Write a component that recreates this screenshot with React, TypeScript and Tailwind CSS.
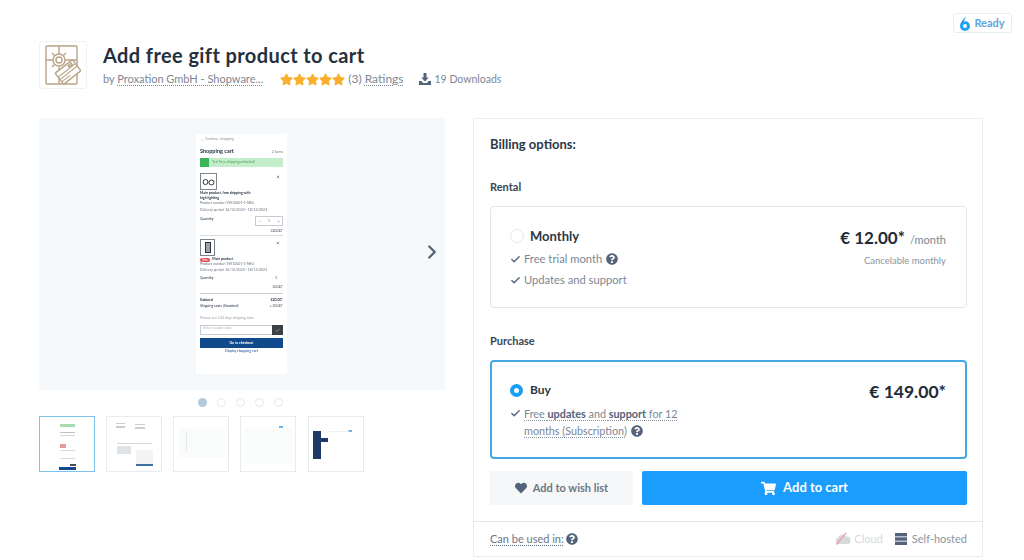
import { Check, ChevronLeft, ChevronRight, Minus, Plus, X } from 'lucide-react'
import { FaHeart, FaQuestionCircle, FaShoppingCart, FaStar } from 'react-icons/fa'

const HelpIcon = ({ size = 12 }: { size?: number }) => (
  <FaQuestionCircle size={size} className="text-[#54637a] shrink-0" />
)

function GiftLogo() {
  return (
    <svg width="36" height="40" viewBox="0 0 36 40" fill="none" stroke="#b9a488" strokeWidth="1.400">
      <rect x="1" y="1" width="31" height="38" rx="1" />
      <path d="M14 1v8M14 22v17M1 15h7M20 15h12" />
      <circle cx="14" cy="15" r="6" />
      <circle cx="14" cy="15" r="3" />
      <path d="M9.500 10.500 7 8M18.500 10.500 21 8M9.500 19.500 7 22" />
      <g transform="rotate(-38 23 27)" fill="#fff">
        <rect x="12" y="20" width="22" height="14" rx="1.500" />
        <path d="M12 25h22M12 28h22M12 31h11" strokeWidth="1.100" />
        <rect x="27" y="22" width="4" height="1.800" fill="none" />
      </g>
    </svg>
  )
}

function DropIcon() {
  return (
    <svg width="10" height="15" viewBox="0 0 10 15">
      <path d="M6 0C3.500 3.500 0 6.500 0 10a5 5 0 0 0 10 0 4.600 4.600 0 0 0-6-4.400C4.500 3.800 5.400 1.800 6 0z" fill="#1fa0f0" />
      <circle cx="5" cy="10" r="2" fill="#fff" />
    </svg>
  )
}

function DownloadIcon() {
  return (
    <svg width="12" height="12" viewBox="0 0 12 12" fill="#54637a">
      <path d="M4.500 0h3v4.500h2.200L6 8.500 2.300 4.500h2.200z" />
      <path d="M0 8h2.500L4 10h4l1.500-2H12v4H0z" />
    </svg>
  )
}

function CloudOffIcon() {
  return (
    <svg width="16" height="13" viewBox="0 0 16 13">
      <path d="M3.500 12a3 3 0 0 1-.6-5.900A4.500 4.500 0 0 1 11 4.500 3.800 3.800 0 0 1 12.500 12z" fill="#d6d9dd" />
      <path d="M1.500 12.500 11 .8" stroke="#e8a0a0" strokeWidth="1.300" />
    </svg>
  )
}

function ServerIcon() {
  return (
    <svg width="12" height="12" viewBox="0 0 12 12" fill="#54637a">
      <rect x="0" y="0" width="12" height="3.400" />
      <rect x="0" y="4.300" width="12" height="3.400" />
      <rect x="0" y="8.600" width="12" height="3.400" />
    </svg>
  )
}

function PhoneMock() {
  return (
    <div className="w-[91px] h-[240px] mr-[1px] bg-white flex flex-col px-[4px] pt-[3px] text-[3.500px] leading-[5px] text-[#6b7581] blur-[0.4px]">
      <div className="flex items-center gap-[1px] text-[#8b95a1]">
        <ChevronLeft size={4} />
        <span>Continue shopping</span>
      </div>
      <div className="flex items-baseline justify-between mt-[7px]">
        <span className="text-[5.500px] font-bold text-[#1f2d3d]">Shopping cart</span>
        <span>2 items</span>
      </div>
      <div className="flex items-center h-[9px] bg-[#c4eecb] mt-[3px] text-[#4f9c5b]">
        <span className="w-[9px] h-[9px] bg-[#3cb558] mr-[3px] shrink-0" />
        <span>Yes! Free shipping unlocked!</span>
      </div>
      <div className="flex justify-between mt-[6px]">
        <div className="w-[17px] h-[17px] border border-[#7b838c] flex items-center justify-center">
          <svg width="13" height="8" viewBox="0 0 13 8" fill="none" stroke="#333" strokeWidth="1">
            <circle cx="3.500" cy="4" r="2.500" />
            <circle cx="9.500" cy="4.500" r="2.500" />
          </svg>
        </div>
        <X size={4} className="text-[#444] mr-[3px] mt-[2px]" strokeWidth={3} />
      </div>
      <div className="mt-[1px] font-bold text-[#1f2d3d] w-[52px]">Main product, free shipping with high lighting</div>
      <div>Product number: SW10001-1-NEU</div>
      <div className="mt-[2px]">Delivery period: 16/12/2023 - 18/12/2023</div>
      <div className="flex items-center justify-between mt-[3px]">
        <span className="text-[#1f2d3d] -mt-[3px]">Quantity</span>
        <div className="w-[28px] h-[10px] border border-[#c6cbd1] flex items-center justify-between px-[2px]">
          <Minus size={3} />
          <span>1</span>
          <Plus size={3} />
        </div>
      </div>
      <div className="text-right mt-[3px] text-[#1f2d3d]">€20.00*</div>
      <div className="border-t border-[#d7dbdf] mt-[1px] pt-[3px] flex justify-between">
        <div className="w-[15px] h-[17px] border border-[#7b838c] flex items-center justify-center">
          <div className="w-[6px] h-[11px] border border-[#333] bg-[#9aa3ad]" />
        </div>
        <X size={4} className="text-[#444] mr-[3px] mt-[2px]" strokeWidth={3} />
      </div>
      <div className="flex items-center gap-[2px] mt-[1px] text-[#1f2d3d]">
        <span className="bg-[#e5484d] text-white rounded-[2px] px-[2px] leading-[4px]">Sale</span>
        <span className="font-bold">Main product</span>
      </div>
      <div>Product number: SW10001-1-NEU</div>
      <div className="mt-[1px]">Delivery period: 16/12/2023 - 18/12/2023</div>
      <div className="flex justify-between mt-[3px] text-[#1f2d3d]">
        <span>Quantity</span>
        <span className="mr-[6px]">1</span>
      </div>
      <div className="text-right mt-[4px] text-[#1f2d3d]">€0.00*</div>
      <div className="border-t border-[#c9ced3] mt-[3px] pt-[4px] flex justify-between font-bold text-[#1f2d3d]">
        <span>Subtotal</span>
        <span>€20.00*</span>
      </div>
      <div className="flex justify-between mt-[1px] text-[#1f2d3d]">
        <span>Shipping costs (Standard)</span>
        <span>+ €0.00*</span>
      </div>
      <div className="mt-[7px] text-[#9aa3ad]">Promo: ten 100 days shipping store</div>
      <div className="flex h-[10px] mt-[4px] border border-[#c6cbd1]">
        <span className="flex-1 px-[2px] text-[#b2b9c1]">Enter coupon code</span>
        <span className="w-[11px] bg-[#3b4045] flex items-center justify-center -my-px -mr-px">
          <Check size={5} className="text-white" />
        </span>
      </div>
      <div className="h-[10px] bg-[#104a8c] mt-[3px] text-white text-center leading-[10px] font-bold">Go to checkout</div>
      <div className="text-center mt-[1px] text-[#104a8c]">Display shopping cart</div>
    </div>
  )
}

function Thumb({ active, children }: { active?: boolean; children?: React.ReactNode }) {
  return (
    <div className={`w-[56px] h-[56px] border bg-white relative overflow-hidden ${active ? 'border-[#7cc4ec]' : 'border-[#e9ecee]'}`}>
      {children}
    </div>
  )
}

function Gallery() {
  return (
    <div className="w-[406px] shrink-0">
      <div className="relative h-[272px] bg-[#f5f9fb] flex items-center justify-center">
        <PhoneMock />
        <ChevronRight size={22} strokeWidth={2.500} className="absolute right-[2px] top-[123px] text-[#54637a]" />
      </div>
      <div className="flex justify-center gap-[10px] mt-[8px] ml-[-3px]">
        <span className="w-[9px] h-[9px] rounded-full bg-[#b4cbde]" />
        <span className="w-[9px] h-[9px] rounded-full border border-[#e3e8ec]" />
        <span className="w-[9px] h-[9px] rounded-full border border-[#e3e8ec]" />
        <span className="w-[9px] h-[9px] rounded-full border border-[#e3e8ec]" />
        <span className="w-[9px] h-[9px] rounded-full border border-[#e3e8ec]" />
      </div>
      <div className="flex gap-[11px] mt-[9px]">
        <Thumb active>
          <div className="flex flex-col items-center pt-[7px] gap-[2px] h-full blur-[0.4px]">
            <div className="w-[15px] h-[3px] bg-[#a6dcae]" />
            <div className="w-[15px] h-[1px] bg-[#b9c1c9] mt-[3px]" />
            <div className="w-[15px] h-[1px] bg-[#d5dade]" />
            <div className="w-[6px] h-[4px] bg-[#e89a9a] mr-[9px] mt-[6px]" />
            <div className="w-[15px] h-[1px] bg-[#d5dade]" />
            <div className="w-[15px] h-[1px] bg-[#d5dade] mt-[5px]" />
            <div className="w-[6px] h-[2px] bg-[#4a5058] ml-[12px] mt-[3px]" />
            <div className="w-[17px] h-[3px] bg-[#104a8c] -mt-[1px]" />
          </div>
        </Thumb>
        <Thumb>
          <div className="absolute inset-0 blur-[0.4px]">
            <div className="absolute left-[9px] top-[6px] w-[9px] h-[1px] bg-[#c9ced3]" />
            <div className="absolute left-[9px] top-[9px] w-[9px] h-[2px] bg-[#c9ced3]" />
            <div className="absolute left-[28px] top-[7px] w-[10px] h-[1px] bg-[#c9ced3]" />
            <div className="absolute left-[28px] top-[10px] w-[10px] h-[2px] bg-[#c9ced3]" />
            <div className="absolute left-[10px] top-[26px] w-[35px] h-[1px] bg-[#d5dade]" />
            <div className="absolute left-[10px] top-[29px] w-[14px] h-[8px] bg-[#dfe3e6]" />
            <div className="absolute right-[8px] bottom-[6px] w-[17px] h-[15px] bg-[#f1f3f5]" />
            <div className="absolute right-[8px] bottom-[5px] w-[17px] h-[2px] bg-[#3f6fa3]" />
          </div>
        </Thumb>
        <Thumb>
          <div className="absolute left-[5px] top-[11px] w-[46px] h-[30px] bg-[#fafbfb]" />
          <div className="absolute left-[12px] top-[14px] w-[6px] h-[20px] border-l border-[#e6e9ec]" />
        </Thumb>
        <Thumb>
          <div className="absolute left-[4px] top-[11px] w-[48px] h-[36px] bg-[#fafbfb]" />
          <div className="absolute right-[12px] top-[9px] w-[4px] h-[2px] bg-[#6ab7e6]" />
        </Thumb>
        <div className="ml-[1px]">
          <Thumb>
            <div className="absolute left-[4px] top-[14px] w-[8px] h-[28px] bg-[#1e3a66]" />
            <div className="absolute left-[12px] top-[21px] w-[7px] h-[4px] bg-[#1e3a66]" />
            <div className="absolute right-[11px] top-[13px] w-[4px] h-[2px] bg-[#6ab7e6]" />
            <div className="absolute left-[20px] top-[14px] w-[20px] h-[1px] bg-[#eef0f2]" />
          </Thumb>
        </div>
      </div>
    </div>
  )
}

function Feature({ children }: { children: React.ReactNode }) {
  return (
    <div className="flex items-start gap-[3px] text-[11.200px] leading-[16px] text-[#7c8794]">
      <Check size={11} strokeWidth={3} className="text-[#54637a] mt-[3px] shrink-0" />
      <span>{children}</span>
    </div>
  )
}

function BillingPanel() {
  return (
    <div className="w-[510px] h-[439px] border border-[#eaedf0] rounded-[2px] shrink-0 flex flex-col">
      <div className="pl-[16px] pr-[15px] pt-[16px] flex-1">
        <div className="text-[13px] leading-[18px] font-bold text-[#2c3846]">Billing options:</div>
        <div className="text-[11px] leading-[14px] font-bold text-[#3a4654] mt-[27px]">Rental</div>
        <div className="h-[102px] mt-[12px] border border-[#e3e7ea] rounded-[4px] flex justify-between pl-[19px] pr-[20px] pt-[21px]">
          <div>
            <div className="flex items-center gap-[6px]">
              <span className="w-[14px] h-[14px] rounded-full border border-[#e6e9ec]" />
              <span className="text-[13px] leading-[16px] font-bold text-[#2c3846]">Monthly</span>
            </div>
            <div className="mt-[7px] flex flex-col gap-[5px]">
              <Feature>
                <span className="inline-flex items-center gap-[4px]">Free trial month <HelpIcon /></span>
              </Feature>
              <Feature>Updates and support</Feature>
            </div>
          </div>
          <div className="text-right -mt-[1px]">
            <div className="leading-[22px]">
              <span className="text-[17px] font-bold text-[#1f2b38]">€ 12.00*</span>
              <span className="text-[11px] text-[#7c8794] ml-[5px]">/month</span>
            </div>
            <div className="text-[9.500px] leading-[14px] text-[#8b95a1] mt-[3px]">Cancelable monthly</div>
          </div>
        </div>
        <div className="text-[11px] leading-[14px] font-bold text-[#3a4654] mt-[26px]">Purchase</div>
        <div className="h-[99px] mt-[12px] border-2 border-[#45a8e6] rounded-[4px] flex justify-between pl-[18px] pr-[19px] pt-[20px]">
          <div>
            <div className="flex items-center gap-[7px]">
              <span className="w-[13px] h-[13px] rounded-full border-[4px] border-[#1a9df5] bg-white" />
              <span className="text-[12px] leading-[16px] font-bold text-[#2c3846]">Buy</span>
            </div>
            <div className="mt-[7px]">
              <Feature>
                <span className="text-[10.800px] leading-[17px] underline decoration-dotted decoration-[#8b95a1] underline-offset-2">
                  Free <b className="text-[#54637a]">updates</b> and <b className="text-[#54637a]">support</b> for 12<br />months (Subscription)
                </span>
                <span className="inline-block align-[-2px] ml-[4px]"><HelpIcon /></span>
              </Feature>
            </div>
          </div>
          <div className="text-[17.500px] leading-[22px] font-bold text-[#1f2b38] -mt-[1px]">€ 149.00*</div>
        </div>
        <div className="flex gap-[9px] mt-[12px] h-[34px]">
          <div className="w-[143px] bg-[#f5f7f9] rounded-[2px] flex items-center justify-center gap-[6px] text-[11px] font-bold text-[#6b7684]">
            <FaHeart size={12} className="text-[#54637a]" />
            <span>Add to wish list</span>
          </div>
          <div className="flex-1 bg-[#1a9dfc] rounded-[2px] flex items-center justify-center gap-[7px] text-[13px] font-bold text-white">
            <FaShoppingCart size={15} />
            <span>Add to cart</span>
          </div>
        </div>
      </div>
      <div className="h-[35px] border-t border-[#e3e7ea] flex items-center justify-between pl-[16px] pr-[15px] pb-[1px] text-[11px] leading-none">
        <div className="flex items-center gap-[2px] text-[#6b7684]">
          <span className="underline decoration-dotted underline-offset-2">Can be used in:</span>
          <HelpIcon />
        </div>
        <div className="flex items-center">
          <CloudOffIcon />
          <span className="text-[#d6d9dd] ml-[3px]">Cloud</span>
          <span className="ml-[12px]"><ServerIcon /></span>
          <span className="text-[#8b95a1] ml-[5px]">Self-hosted</span>
        </div>
      </div>
    </div>
  )
}

export default function App() {
  return (
    <div className="w-[1024px] h-[560px] bg-white overflow-hidden font-['Lato',sans-serif]">
      <div className="flex justify-end pr-[12px] pt-[13px]">
        <div className="w-[59px] h-[20px] border border-[#e4eef5] rounded-[3px] flex items-center justify-center gap-[4px] text-[11px] font-bold text-[#5da5dc]">
          <DropIcon />
          <span>Ready</span>
        </div>
      </div>
      <div className="flex items-center gap-[16px] pl-[39px] mt-[8px]">
        <div className="w-[48px] h-[48px] border border-[#f0f2f4] rounded-[3px] flex items-center justify-center">
          <GiftLogo />
        </div>
        <div className="-mt-[1px]">
          <div className="text-[20px] leading-[24px] tracking-[0.4px] font-bold text-[#24303d]">Add free gift product to cart</div>
          <div className="flex items-center text-[11px] leading-[14px] text-[#7c8794] mt-[5px]">
            <span>by <span className="underline decoration-dotted underline-offset-2">Proxation GmbH - Shopware...</span></span>
            <span className="flex ml-[17px] text-[#fbb02d]">
              <FaStar size={13} /><FaStar size={13} /><FaStar size={13} /><FaStar size={13} /><FaStar size={13} />
            </span>
            <span className="ml-[3px] text-[12px]">(3) <span className="underline decoration-dotted underline-offset-2">Ratings</span></span>
            <span className="ml-[15px] mr-[4px]"><DownloadIcon /></span>
            <span className="text-[10.500px]">19 Downloads</span>
          </div>
        </div>
      </div>
      <div className="flex gap-[28px] pl-[39px] mt-[29px]">
        <Gallery />
        <BillingPanel />
      </div>
    </div>
  )
}
